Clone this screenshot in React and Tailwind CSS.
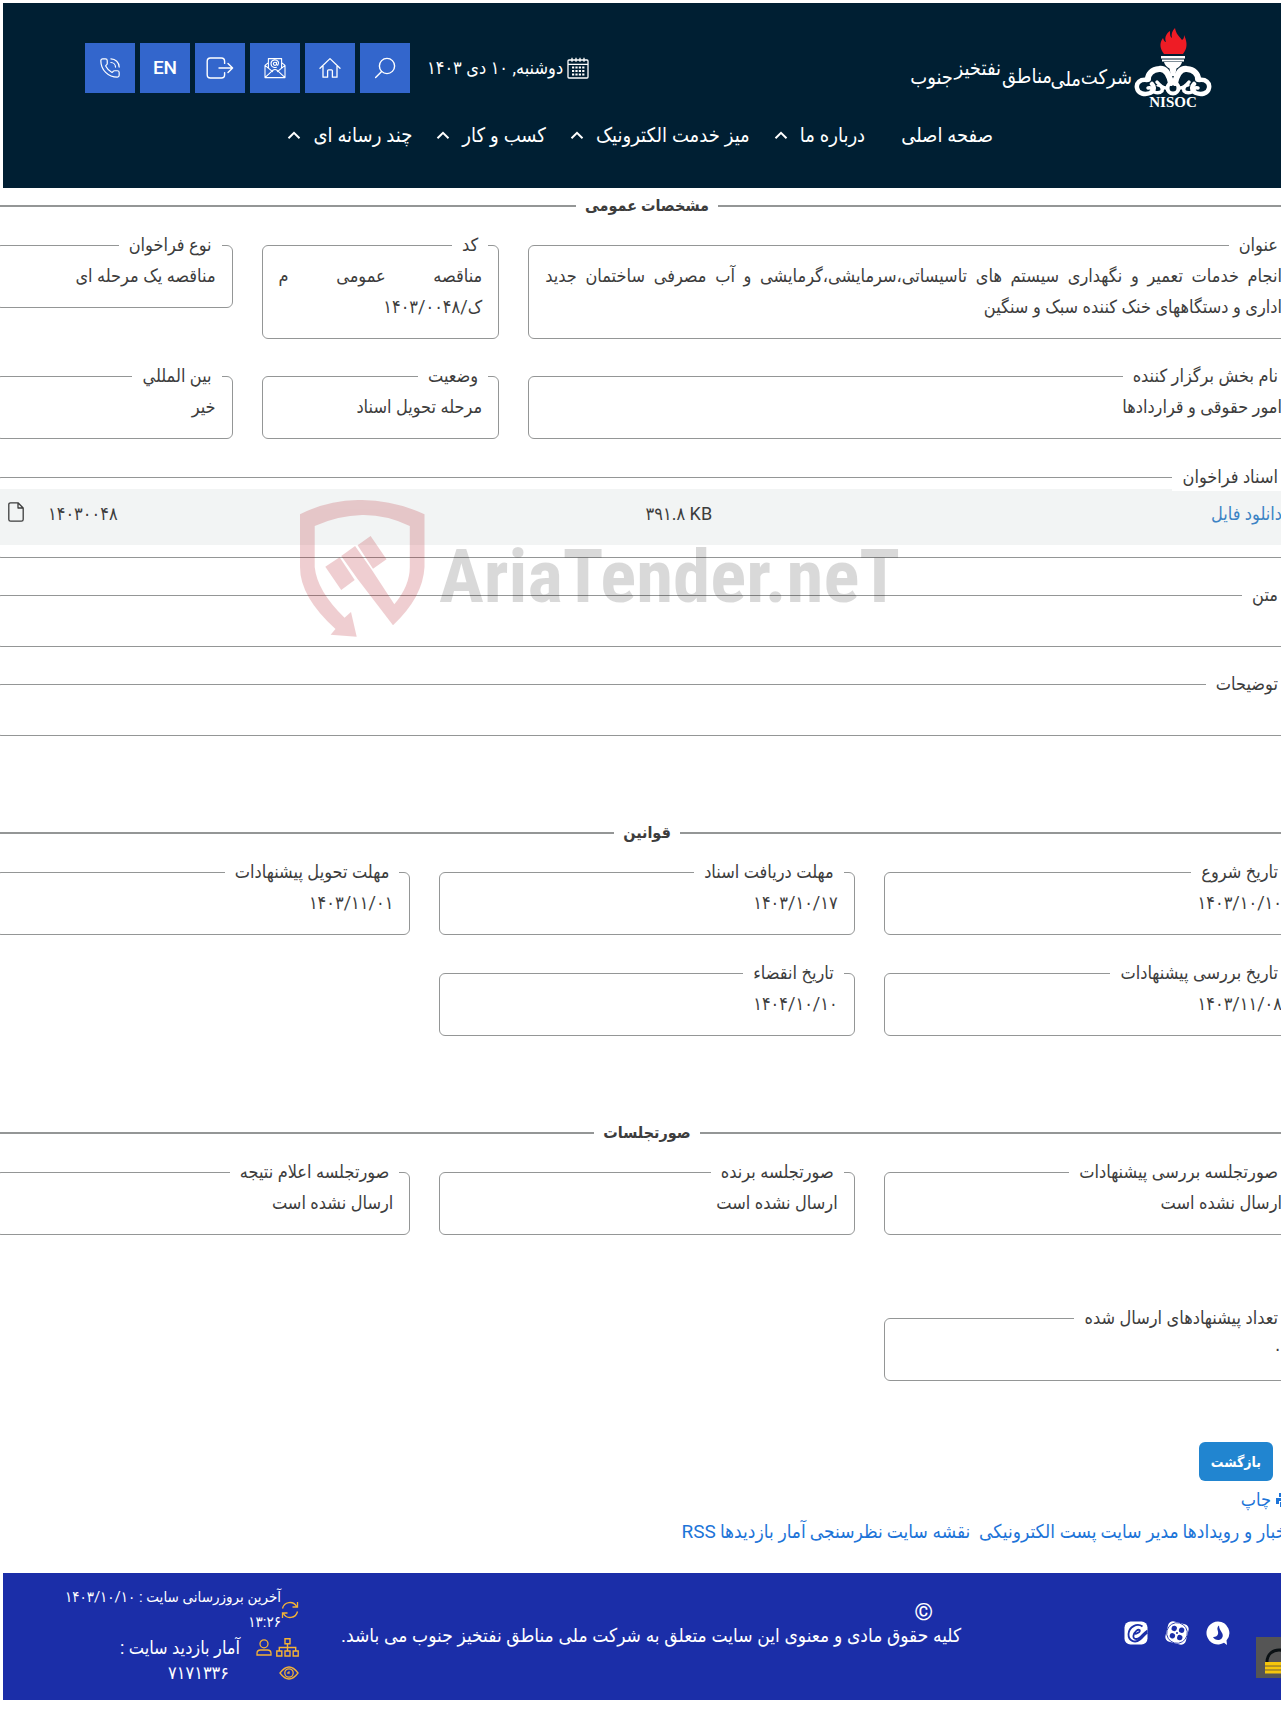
import { PhoneCall } from "lucide-react";

const menuItems = [
  { title: "صفحه اصلی", hasChildren: false },
  { title: "درباره ما", hasChildren: true },
  { title: "میز خدمت الکترونیک", hasChildren: true },
  { title: "کسب و کار", hasChildren: true },
  { title: "چند رسانه ای", hasChildren: true }
];

// the company name steps up and down like a calligraphic line
const logoWords = [
  { word: "شرکت", x: 224, y: 56 },
  { word: "ملی", x: 173, y: 58 },
  { word: "مناطق", x: 144, y: 55 },
  { word: "نفتخیز", x: 93, y: 47 },
  { word: "جنوب", x: 45, y: 56 }
];

const ruleFields = [
  { label: "تاریخ شروع", value: "۱۴۰۳/۱۰/۱۰" },
  { label: "مهلت دریافت اسناد", value: "۱۴۰۳/۱۰/۱۷" },
  { label: "مهلت تحویل پیشنهادات", value: "۱۴۰۳/۱۱/۰۱" },
  { label: "تاریخ بررسی پیشنهادات", value: "۱۴۰۳/۱۱/۰۸" },
  { label: "تاریخ انقضاء", value: "۱۴۰۴/۱۰/۱۰" }
];

const minutesFields = [
  { label: "صورتجلسه بررسی پیشنهادات", value: "ارسال نشده است" },
  { label: "صورتجلسه برنده", value: "ارسال نشده است" },
  { label: "صورتجلسه اعلام نتیجه", value: "ارسال نشده است" }
];

const footerLinks = ["اخبار و رویدادها", "مدیر سایت", "پست الکترونیکی ", "نقشه سایت", "نظرسنجی", "آمار بازدیدها", "RSS"];

const SearchIcon = () => (
  <svg viewBox="0 0 22 22" className="h-[22px] w-[22px]" fill="none" stroke="currentColor" strokeWidth="1.4" strokeLinecap="round">
    <circle cx="13" cy="9" r="7.6" />
    <path d="M7.6 14.6 1.6 20.6" />
  </svg>
);

const HomeIcon = () => (
  <svg viewBox="0 0 22 22" className="h-[22px] w-[22px]" fill="none" stroke="currentColor" strokeWidth="1.3" strokeLinecap="round" strokeLinejoin="round">
    <path d="M1 11.2 11 1.6l10 9.6M4 9v11.2h4.6v-6.4q0-1 1-1h2.8q1 0 1 1v6.4H18V9" />
  </svg>
);

const MailIcon = () => (
  <svg viewBox="0 0 22 22" className="h-[22px] w-[22px]" fill="none" stroke="currentColor" strokeWidth="1.1" strokeLinecap="round" strokeLinejoin="round">
    <path d="M4.4 5.6 1 8.4v12.2h20V8.4l-3.4-2.8M1 8.4l7.6 6.2M21 8.4l-7.6 6.2M1.2 20.4 9 13.2q2-1.5 4 0l7.8 7.2M4.4 11V1.6h13.2V11" />
    <circle cx="11" cy="6.8" r="1.6" />
    <path d="M12.6 5.2v2q.3 1.3 1.4.7 1.2-1.4.2-3.3-1.4-1.9-3.8-1.7-2.9.4-3.4 3.2-.2 3.1 2.6 4.2 1.4.4 2.8 0" />
  </svg>
);

const ExitIcon = () => (
  <svg viewBox="0 0 28 22" className="h-[22px] w-[28px]" fill="none" stroke="currentColor" strokeWidth="1.4" strokeLinecap="round" strokeLinejoin="round">
    <path d="M18.6 6.4V4.2Q18.6 1 15.4 1H4.4Q1.2 1 1.2 4.2v13.6Q1.2 21 4.4 21h11q3.2 0 3.2-3.2v-2.2M13 11h13.6M22 6.4l4.6 4.6-4.6 4.6" />
  </svg>
);

const CalendarIcon = () => (
  <svg viewBox="0 0 22 22" className="h-[22px] w-[22px]" fill="none" stroke="currentColor" strokeWidth="1.3">
    <rect x="1" y="3" width="20" height="18" rx="1" />
    <path d="M1 7.4h20M5 .8v4M9 .8v4M13 .8v4M17 .8v4" />
    <path d="M5 10.5h12.5M5 14h12.5M5 17.5h12.5" strokeWidth="1.8" strokeDasharray="2.2 1.2" />
  </svg>
);

const ChevronIcon = () => (
  <svg viewBox="0 0 14 8" className="h-2 w-[14px]" fill="none" stroke="currentColor" strokeWidth="2">
    <path d="M1.500 7.200 7 1.800l5.500 5.400" />
  </svg>
);

const Logo = () => (
  <a href="#" aria-label="NISOC" className="flex items-start text-white">
    <svg viewBox="0 0 78 82" className="h-[82px] w-[78px] shrink-0">
      <path
        d="M30 26C26 21 25 15 29 10c1 3 2 4 3 4-2-5 1-9 4-11 0 4 0 6 2 7C37 6 38 3 41 0c1 6 4 8 7 12 2-1 2-3 2-5 4 8 3 14-1 19Z"
        fill="#ee1c25"
      />
      <path d="M27 28h24v2.500H27zM28 31.500h22v2H28zM30 34h18q-1 4-5.500 6.500L41 48h-4l-1.500-7.500Q31 38 30 34Z" fill="#fff" />
      <g fill="none" stroke="#fff" strokeWidth="6" strokeLinecap="round">
        <path d="M37 55C35 46 31 40 25 41c-7 .5-11 5-11 10" />
        <path d="M41 55c2-9 6-15 12-14 7 .5 11 5 11 10" />
      </g>
      <g fill="none" stroke="#fff" strokeWidth="3.500" strokeLinecap="round">
        <path d="M13 52c-7-1-11 3-10 8 1 6 8 7 13 5 4-2 5-6 2-9" strokeWidth="4.500" />
        <path d="M65 52c7-1 11 3 10 8-1 6-8 7-13 5-4-2-5-6-2-9" strokeWidth="4.500" />
        <path d="M14 60q5-1 6 4 5 2 8-1c1-3-1-6-4-6M23 54q5 6 9 6M64 60q-5-1-6 4-5 2-8-1c-1-3 1-6 4-6M55 54q-5 6-9 6" />
        <circle cx="39" cy="60" r="5.500" strokeWidth="4" />
      </g>
      <text x="39" y="79" textAnchor="middle" className="fill-white font-['Liberation_Serif'] text-[15px] font-bold">
        NISOC
      </text>
    </svg>
    <svg viewBox="0 0 226 82" className="h-[82px] w-[226px] shrink-0" direction="rtl">
      {logoWords.map((item) => (
        <text key={item.word} x={item.x} y={item.y} className="fill-white text-xl">
          {item.word}
        </text>
      ))}
    </svg>
  </a>
);

const IconButton = ({ label, children }) => (
  <button type="button" aria-label={label} className="flex h-[50px] w-[50px] items-center justify-center bg-[#3366cc] text-[19px] font-medium text-white">
    {children}
  </button>
);

const SiteHeader = () => (
  <header className="ml-[3px] mt-[3px] bg-[#001f33] pb-[37px] text-white">
    <div className="flex items-start pr-[69px] pl-[82px] pt-[25px]">
      <Logo />
      <div className="mr-auto flex items-center gap-[17px] pt-[15px]">
        <div className="flex items-center gap-1 text-lg">
          <CalendarIcon />
          <span>دوشنبه, ۱۰ دی ۱۴۰۳</span>
        </div>
        <div className="flex gap-[5px]">
          <IconButton label="جستجو"><SearchIcon /></IconButton>
          <IconButton label="خانه"><HomeIcon /></IconButton>
          <IconButton label="پست الکترونیکی"><MailIcon /></IconButton>
          <IconButton label="ورود"><ExitIcon /></IconButton>
          <IconButton label="English">EN</IconButton>
          <IconButton label="تماس با ما">
            <PhoneCall className="h-[22px] w-[22px]" strokeWidth={1.3} />
          </IconButton>
        </div>
      </div>
    </div>
    <nav className="flex items-center gap-6 pr-[288px] pt-[9px] text-xl leading-8">
      {menuItems.map((item) => (
        <a key={item.title} href="#" className={item.hasChildren ? "flex items-center gap-3" : "pl-3"}>
          {item.title}
          {item.hasChildren ? <ChevronIcon /> : null}
        </a>
      ))}
    </nav>
  </header>
);

const SectionTitle = ({ children }) => (
  <h2 className="flex items-center gap-[9px] text-base leading-7 font-bold">
    <span className="h-[2px] flex-1 bg-[#949696]" />
    {children}
    <span className="h-[2px] flex-1 bg-[#949696]" />
  </h2>
);

const Field = ({ label, value, className = "" }) => (
  <fieldset className={`min-w-0 rounded-md border border-[#949696] px-4 pt-[1px] pb-4 ${className}`}>
    <legend className="-mr-[6px] px-[10px] leading-7">{label}</legend>
    <p className="text-justify leading-[31px]">{value}</p>
  </fieldset>
);

const FileIcon = () => (
  <svg viewBox="0 0 16 20" className="h-5 w-4" fill="none" stroke="currentColor" strokeWidth="1.3" strokeLinejoin="round">
    <path d="M10 .8H2.600Q.8.800.8 2.600v14.800q0 1.800 1.800 1.800h10.800q1.800 0 1.800-1.800V6ZM10 .8V6h5.200" />
  </svg>
);

const Watermark = () => (
  <svg viewBox="0 0 640 138" className="pointer-events-none absolute left-[305px] top-[37px] h-[138px] w-[640px]" aria-hidden="true">
    <g fill="#b3121d" opacity="0.2">
      <path d="M0 14.300Q29-.5 62 0t62.500 14.300V67Q123 97 93 125.300L57.600 79 41.200 56 55.100 46l16.300 23.300 22.900 35Q109.800 86 109.800 67V26Q86 14.500 62 15T14.700 26v41Q17 91 44.500 117.700L51 112l5.700 24.700-26.100-2 4.900-5.700Q0 97 0 67Z" />
      <path d="m25.300 66.700 14.300-9.400L54.700 80 41.200 90ZM57.600 45.300 70.600 36l15.900 23.300L73 68.700Z" />
    </g>
    <text x="139" y="102" className="fill-black/15 font-['Roboto_Condensed'] text-[75px] font-bold" direction="ltr">
      AriaTender.neT
    </text>
  </svg>
);

const Documents = () => (
  <div className="relative mt-6 space-y-[23px]">
    <fieldset className="min-w-0 rounded-md border border-[#949696] pb-3">
      <legend className="relative mr-[10px] bg-white px-[10px] leading-7">اسناد فراخوان</legend>
      <table className="-mt-[2px] w-full bg-[#f2f4f4]">
        <tbody>
          <tr className="h-14">
            <td className="w-[45%] pr-4 pb-[6px]">
              <a href="#" className="text-[#3b83c4]">دانلود فایل</a>
            </td>
            <td dir="ltr" className="pb-[6px] text-right">۳۹۱.۸ KB</td>
            <td className="pb-[6px] text-left">۱۴۰۳۰۰۴۸</td>
            <td className="w-[52px] pr-6 pb-[10px]">
              <FileIcon />
            </td>
          </tr>
        </tbody>
      </table>
    </fieldset>
    <fieldset className="min-w-0 rounded-md border border-[#949696] pb-[37px]">
      <legend className="mr-[10px] px-[10px] leading-7">متن</legend>
    </fieldset>
    <fieldset className="min-w-0 rounded-md border border-[#949696] pb-[37px]">
      <legend className="mr-[10px] px-[10px] leading-7">توضیحات</legend>
    </fieldset>
    <Watermark />
  </div>
);

const SoroushIcon = () => (
  <svg viewBox="0 0 24 24" className="h-6 w-6">
    <path d="M12 .5A11.500 11.500 0 1 0 18 21.800L21 24l-.5-4.500A11.500 11.500 0 0 0 12 .5Z" fill="#fff" />
    <path d="M13 4.500c-3.500 3 0 5.500-1 8.500-.6 2-2.500 3.200-5 3 1.500 3 6.500 4.500 9 1 3-4.500-3-7-3-12.500Z" fill="#1b2ea8" />
  </svg>
);

const AparatIcon = () => (
  <svg viewBox="0 0 24 24" className="h-6 w-6">
    <g transform="rotate(14 12 12)">
      <rect x="1.500" y="1.500" width="21" height="21" rx="5" fill="#fff" />
      <circle cx="12" cy="12" r="10.300" fill="#fff" stroke="#1b2ea8" strokeWidth=".8" />
      <g fill="#1b2ea8">
        <circle cx="8.200" cy="8.200" r="2.700" />
        <circle cx="15.800" cy="8.200" r="2.700" />
        <circle cx="8.200" cy="15.800" r="2.700" />
        <circle cx="15.800" cy="15.800" r="2.700" />
        <circle cx="12" cy="12" r="1" />
      </g>
    </g>
  </svg>
);

const EitaaIcon = () => (
  <svg viewBox="0 0 24 24" className="h-6 w-6">
    <rect x=".5" y=".5" width="23" height="23" rx="6" fill="#fff" />
    <path
      d="M23.500 9.500C19 12 17 17.500 12.500 18c-2.500.2-3.500-1.500-3-3.500C10.500 10.500 14 8 15.500 9c1.500 1.500-2 4-6 4M18.500 5.500C13 1.500 5 6 4.500 13c-.2 7 6.500 9.500 11.500 5.500 3-2.500 4.500-5 7.500-7"
      fill="none"
      stroke="#1b2ea8"
      strokeWidth="1.8"
    />
  </svg>
);

const RefreshIcon = () => (
  <svg viewBox="0 0 18 18" className="h-[18px] w-[18px] shrink-0 text-[#f5b335]" fill="none" stroke="currentColor" strokeWidth="1.3">
    <path d="M1.500 7.500A7.600 7.600 0 0 1 15.600 5.500M16.500 1v5H11.500M16.500 10.500A7.600 7.600 0 0 1 2.400 12.500M1.500 17v-5H6.500" />
  </svg>
);

const SitemapIcon = () => (
  <svg viewBox="0 0 23 19" className="h-[19px] w-[23px] text-[#f5b335]" fill="none" stroke="currentColor" strokeWidth="1.4">
    <path d="M9 .8h5v5H9zM.8 13h5v5h-5zM9 13h5v5H9zM17.200 13h5v5h-5zM11.500 6v7M3.300 13V9.500h16.400V13" />
  </svg>
);

const UserIcon = () => (
  <svg viewBox="0 0 16 17" className="h-[17px] w-4 text-[#f5b335]" fill="none" stroke="currentColor" strokeWidth="1.3">
    <circle cx="8" cy="4.800" r="4" />
    <path d="M1 16v-1.500q0-3.500 3.500-3.500h7q3.500 0 3.500 3.500V16Z" />
  </svg>
);

const EyeIcon = () => (
  <svg viewBox="0 0 20 14" className="h-[14px] w-5 text-[#f5b335]" fill="none" stroke="currentColor" strokeWidth="1.3">
    <path d="M1 7q9-12 18 0-9 12-18 0Z" />
    <circle cx="10" cy="7" r="4.200" />
    <path d="M10 5.200v1.800H8.200" />
  </svg>
);

const SiteFooter = () => (
  <footer className="relative mt-[25px] ml-[3px] flex items-start bg-[#1b2ea8] pt-3 pr-[51px] pb-[15px] text-white">
    <div className="flex gap-[17px] pt-9">
      <a href="#" aria-label="سروش"><SoroushIcon /></a>
      <a href="#" aria-label="آپارات"><AparatIcon /></a>
      <a href="#" aria-label="ایتا"><EitaaIcon /></a>
    </div>
    <div className="mr-auto pt-[15px] text-[19px] leading-6">
      <div className="pr-7 text-2xl leading-6">©</div>
      <p>کلیه حقوق مادی و معنوی این سایت متعلق به شرکت ملی مناطق نفتخیز جنوب می باشد.</p>
    </div>
    <div className="mr-[42px] ml-[54px] w-[242px] text-lg leading-[25px]">
      <div className="flex items-center text-[15px] leading-[25px]">
        <RefreshIcon />
        <span className="min-w-0">آخرین بروزرسانی سایت : ۱۴۰۳/۱۰/۱۰ ۱۳:۲۶</span>
      </div>
      <div className="flex items-center gap-1">
        <SitemapIcon />
        <UserIcon />
        <span className="pr-3">آمار بازدید سایت :</span>
      </div>
      <div className="flex items-center gap-[50px]">
        <EyeIcon />
        <span>۷۱۷۱۳۳۶</span>
      </div>
    </div>
    <button type="button" aria-label="امنیت" className="absolute right-0 top-16 h-[41px] w-[25px] overflow-hidden bg-[#555555]">
      <svg viewBox="0 0 25 41" className="h-[41px] w-[25px]">
        <path d="M11 25c0-16 24-16 24 0" fill="none" stroke="#0b1114" strokeWidth="3" />
        <path d="M9 25h16v3H9zM9 29.500h16v3H9zM9 34h16v2.500H9z" fill="#f5c60c" />
        <path d="M9 28h16v1.500H9zM9 32.500h16V34H9z" fill="#b9961a" />
      </svg>
    </button>
  </footer>
);

export default function App() {
  return (
    <div dir="rtl" className="flow-root overflow-hidden bg-white font-[Roboto,'DejaVu_Sans_Condensed',sans-serif] text-lg text-[#3d3d3d]">
      <SiteHeader />

      <main>
        <div className="-mr-[18px] -ml-[5px]">
          <section className="pt-1">
            <SectionTitle>مشخصات عمومی</SectionTitle>
            <div className="mt-[11px] grid grid-cols-5 items-start gap-x-[29px] gap-y-[23px]">
              <Field
                className="col-span-3"
                label="عنوان"
                value={"انجام خدمات تعمیر و نگهداری سیستم های تاسیساتی،سرمایشی،گرمایشی و آب مصرفی ساختمان جدید اداری\u00a0و\u00a0دستگاههای خنک کننده سبک و سنگین"}
              />
              <Field label="کد" value={"مناقصه عمومی م ک/\u2060۱۴۰۳/۰۰۴۸"} />
              <Field label="نوع فراخوان" value="مناقصه یک مرحله ای" />
              <Field className="col-span-3" label="نام بخش برگزار کننده" value="امور حقوقی و قراردادها" />
              <Field label="وضعیت" value="مرحله تحویل اسناد" />
              <Field label="بین المللي" value="خیر" />
            </div>
            <Documents />
          </section>

          <section className="mt-[83px]">
            <SectionTitle>قوانین</SectionTitle>
            <div className="mt-[11px] grid grid-cols-3 gap-x-[29px] gap-y-6">
              {ruleFields.map((field) => (
                <Field key={field.label} label={field.label} value={field.value} />
              ))}
            </div>
          </section>

          <section className="mt-[83px]">
            <SectionTitle>صورتجلسات</SectionTitle>
            <div className="mt-[11px] grid grid-cols-3 gap-x-[29px] gap-y-[69px]">
              {minutesFields.map((field) => (
                <Field key={field.label} label={field.label} value={field.value} />
              ))}
              <Field label="تعداد پیشنهادهای ارسال شده" value="۰" />
            </div>
          </section>
        </div>

        <div className="mt-[61px] pr-2">
          <button type="button" className="h-[39px] rounded-md bg-[#2185d0] px-3 text-sm font-bold text-white">
            بازگشت
          </button>
        </div>
        <div className="-mr-[10px] mt-[3px] leading-8 text-[#1d74d8]">
          <a href="#" className="flex w-fit items-center gap-1">
            <svg viewBox="0 0 16 16" className="h-4 w-4" fill="currentColor">
              <path d="M4 1h8v4H4zM1 6h14v6h-3V9H4v3H1zM5 10h6v5H5z" />
            </svg>
            چاپ
          </a>
          <div className="flex gap-1 text-[19px] leading-8 whitespace-pre">
            {footerLinks.map((link) => (
              <a key={link} href="#">{link}</a>
            ))}
          </div>
        </div>
      </main>

      <SiteFooter />
    </div>
  );
}
